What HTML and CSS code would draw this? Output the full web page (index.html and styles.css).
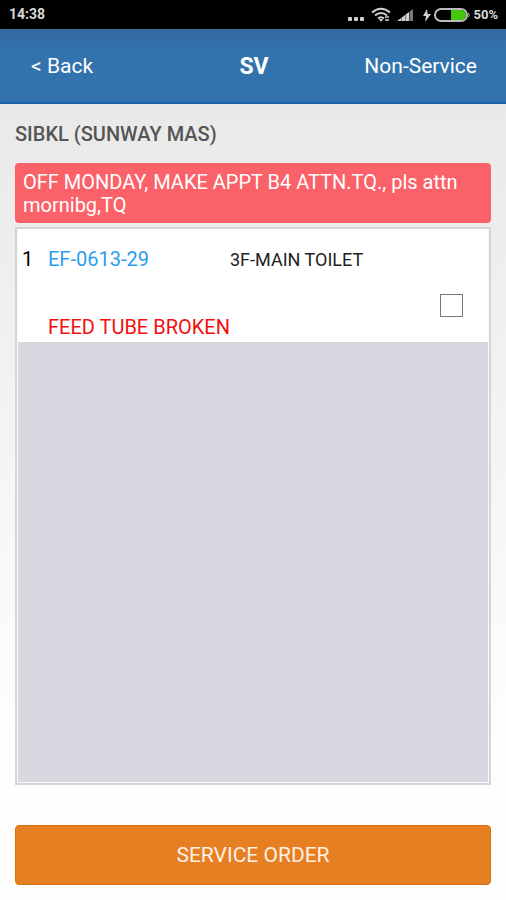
FILE: index.html
```html
<!DOCTYPE html>
<html lang="en">
<head>
    <meta charset="UTF-8">
    <meta name="viewport" content="width=device-width, initial-scale=1">
    <title>SV</title>
    <link rel="stylesheet" href="styles.css">
</head>
<body>
    <!-- Status bar -->
    <div class="status">
        <span class="clock">14:38</span>
        <svg class="status-icons" width="124" height="20" viewBox="0 0 124 20" aria-hidden="true">
            <!-- dots -->
            <g fill="#d0d0d0">
                <rect x="1" y="12" width="4" height="4" rx="1"/>
                <rect x="7" y="12" width="4" height="4" rx="1"/>
                <rect x="13" y="12" width="4" height="4" rx="1"/>
            </g>
            <!-- wifi -->
            <g fill="none" stroke="#d0d0d0" stroke-width="2">
                <path d="M25 7.500Q34 0 43 7.500"/>
                <path d="M28 10.500Q34 5.500 40 10.500"/>
                <path d="M31 13.500Q34 11 37 13.500"/>
            </g>
            <path d="M32 14L34 17L36 14Z" fill="#d0d0d0"/>
            <path d="M38 12h4M38 15h4" stroke="#999" stroke-width="2"/>
            <!-- signal -->
            <path d="M50 16L62 7V16Z" fill="#d0d0d0"/>
            <path d="M62 7L66 4V16H62Z" fill="#777"/>
            <path d="M54.500 11V16M58.500 8V16M62.500 5V16" stroke="#000" stroke-width="1" opacity=".4"/>
            <!-- battery -->
            <path d="M80 4L76 11H79L78 17L84 9H80.500Z" fill="#d0d0d0"/>
            <rect x="88" y="4" width="32" height="12" rx="6" fill="#000" stroke="#bbb" stroke-width="2"/>
            <path d="M104 5H114Q119 6 119 10T114 15H104Z" fill="#42c90a"/>
            <path d="M121.500 8Q123 10 121.500 12" fill="none" stroke="#bbb"/>
        </svg>
        <span class="percent">50%</span>
    </div>

    <!-- Header -->
    <header class="header">
        <a class="back" href="#">&lt; Back</a>
        <h1>SV</h1>
        <a class="non-service" href="#">Non-Service</a>
    </header>

    <main class="content">
        <h2>SIBKL (SUNWAY MAS)</h2>
        <p class="notice">OFF MONDAY, MAKE APPT B4 ATTN.TQ., pls attn mornibg,TQ</p>

        <!-- Service list -->
        <div class="list">
            <div class="item">
                <span class="number">1</span>
                <label class="code" for="item1">EF-0613-29</label>
                <span class="place">3F-MAIN TOILET</span>
                <span class="fault">FEED TUBE BROKEN</span>
                <input type="checkbox" id="item1" name="item1">
            </div>
        </div>

        <button type="button" class="order">SERVICE ORDER</button>
    </main>
</body>
</html>
```
FILE: styles.css
```css
* {
    box-sizing: border-box;
}
body {
    margin: 0;
    min-height: 100vh;
    display: flex;
    flex-direction: column;
    font-family: Roboto, Arial, sans-serif;
    font-size: 20px;
    line-height: 23px;
    background: #fefefe;
}
.status {
    display: flex;
    align-items: center;
    height: 29px;
    padding: 0 8px 0 9px;
    background: #000;
    color: #d8d8d8;
    font-size: 14px;
    font-weight: 700;
}
.status-icons {
    margin-left: auto;
    margin-right: 2px;
}
.percent {
    font-size: 13px;
}
.header {
    display: grid;
    grid-template-columns: 1fr auto 1fr;
    align-items: center;
    height: 75px;
    padding: 2px 29px 0 31px;
    background: linear-gradient(#34699f, #3373ad 20px);
    border-bottom: 2px solid #1864a6;
    color: #fff;
    font-size: 21px;
}
.header a {
    color: #fff;
    text-decoration: none;
}
.header h1 {
    margin: 0;
    font-size: 23px;
}
.non-service {
    justify-self: end;
}
.content {
    flex: 1;
    display: flex;
    flex-direction: column;
    padding: 19px 15px 15px;
    background: linear-gradient(#e9e9e9, #fefefe 80%);
}
.content h2 {
    margin: 0 0 17px;
    font-size: 20px;
    font-weight: 500;
    color: #555;
}
.notice {
    margin: 0 0 4px;
    padding: 8px 8px 6px;
    border-radius: 4px;
    background: #fb6168;
    color: #fff;
}
.list {
    flex: 1;
    margin-bottom: 40px;
    padding: 0 1px 1px;
    border: 2px solid #d5d5d6;
    background: #d8d7e0;
    box-shadow: inset 0 0 0 1px #f8f8f8;
}
.item {
    display: grid;
    grid-template-columns: 26px 182px 1fr auto;
    align-items: center;
    padding: 19px 25px 3px 4px;
    background: #fff;
}
.code {
    color: #2b9df0;
}
.place {
    font-size: 18px;
    color: #222;
}
.fault {
    grid-column: 2 / 4;
    grid-row: 2;
    align-self: end;
    margin-top: 45px;
    color: #f01010;
}
.item input {
    grid-column: 4;
    grid-row: 2;
    width: 23px;
    height: 23px;
    margin: 0;
    appearance: none;
    border: 1px solid #777;
    background: #fff;
}
.item input:checked {
    background: #2b9df0;
}
.order {
    height: 60px;
    border: 1px solid #d8720f;
    border-radius: 4px;
    background: #e57f22;
    color: #fff0e4;
    font-family: inherit;
    font-size: 21px;
    cursor: pointer;
}
```
